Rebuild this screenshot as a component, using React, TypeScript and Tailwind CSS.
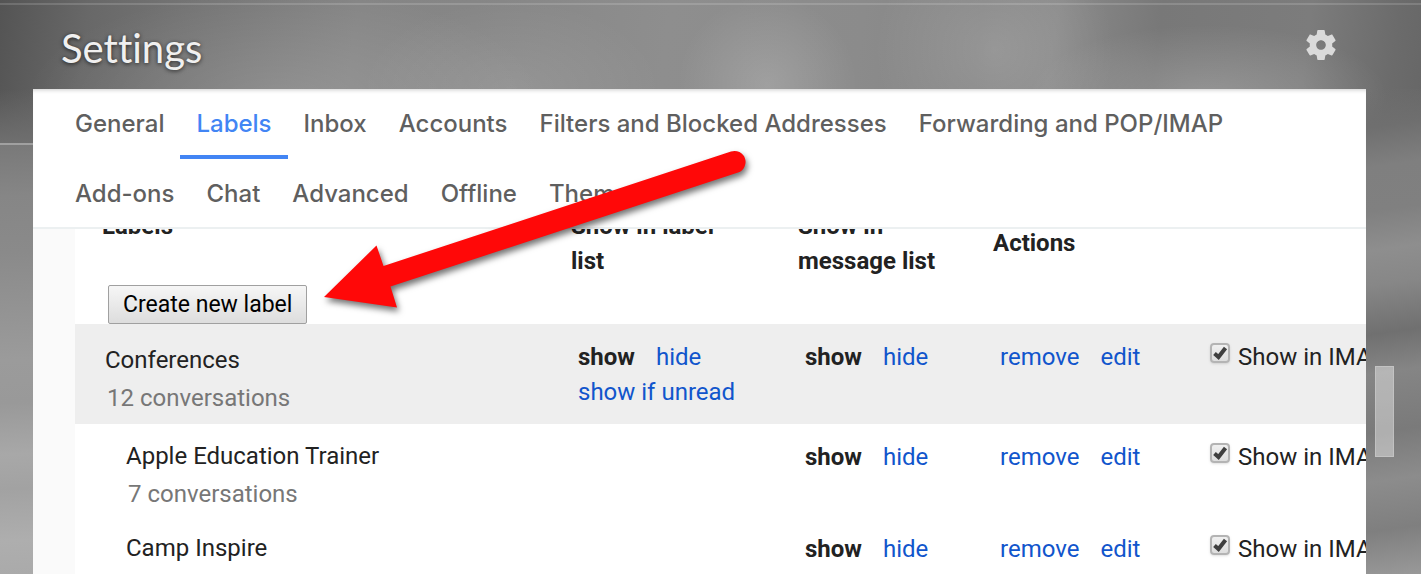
const tabs = [
  "General",
  "Labels",
  "Inbox",
  "Accounts",
  "Filters and Blocked Addresses",
  "Forwarding and POP/IMAP",
  "Add-ons",
  "Chat",
  "Advanced",
  "Offline",
  "Themes",
];

type Label = {
  name: string;
  conversations: string;
  nested: boolean;
  inLabelList: boolean;
};

const labels: Label[] = [
  { name: "Conferences", conversations: "12 conversations", nested: false, inLabelList: true },
  { name: "Apple Education Trainer", conversations: "7 conversations", nested: true, inLabelList: false },
  { name: "Camp Inspire", conversations: "", nested: true, inLabelList: false },
];

function GearIcon() {
  return (
    <svg viewBox="0 0 24 24" className="size-9" fill="#dadada" aria-hidden="true">
      <path d="M19.43 12.98c.04-.32.07-.64.07-.98s-.03-.66-.07-.98l2.11-1.65c.19-.15.24-.42.12-.64l-2-3.46c-.12-.22-.39-.3-.61-.22l-2.49 1c-.52-.4-1.08-.73-1.69-.98l-.38-2.65C14.46 2.18 14.25 2 14 2h-4c-.25 0-.46.18-.49.42l-.38 2.65c-.61.25-1.17.59-1.69.98l-2.49-1c-.23-.09-.49 0-.61.22l-2 3.46c-.13.22-.07.49.12.64l2.11 1.65c-.04.32-.07.65-.07.98s.03.66.07.98l-2.11 1.65c-.19.15-.24.42-.12.64l2 3.46c.12.22.39.3.61.22l2.49-1c.52.4 1.08.73 1.69.98l.38 2.65c.03.24.24.42.49.42h4c.25 0 .46-.18.49-.42l.38-2.65c.61-.25 1.17-.59 1.69-.98l2.49 1c.23.09.49 0 .61-.22l2-3.46c.12-.22.07-.49-.12-.64l-2.11-1.65zM12 15.2c-1.77 0-3.2-1.43-3.2-3.200s1.430-3.200 3.200-3.200 3.200 1.430 3.200 3.200-1.430 3.200-3.200 3.200z" />
    </svg>
  );
}

function Arrow() {
  return (
    <svg
      viewBox="0 0 440 180"
      className="pointer-events-none absolute left-[316px] top-[142px] z-20 h-[180px] w-[440px] drop-shadow-[2px_4px_3px_rgba(0,0,0,0.55)]"
      aria-hidden="true"
    >
      <path
        d="M8 155 L60.500 103.500 L67.500 124 L415 9.500 A11 11 0 0 1 422 30.500 L74.500 144.500 L81 165.500 Z"
        fill="#ff0808"
      />
    </svg>
  );
}

function ImapCheckbox() {
  return (
    <label className="flex items-start gap-2">
      <span className="relative h-9 pt-[3px]">
        <input
          type="checkbox"
          defaultChecked
          className="peer block size-5 appearance-none rounded border-2 border-[#b4b4b4] bg-linear-to-b from-[#f0f0f0] to-[#dedede] shadow-sm"
        />
        <svg
          viewBox="0 0 20 20"
          className="pointer-events-none absolute left-0 top-[3px] hidden size-5 peer-checked:block"
          aria-hidden="true"
        >
          <path d="M4.500 10.500 L8.500 14 L15.500 5" fill="none" stroke="#3f3f3f" strokeWidth="4" />
        </svg>
      </span>
      Show in IMAP
    </label>
  );
}

function ShowHide() {
  return (
    <span className="flex gap-[21px]">
      <b className="font-bold">show</b>
      <a href="#hide" className="text-[#1155cc]">
        hide
      </a>
    </span>
  );
}

// soft light patches over a dark-edged horizontal ramp
const backdrop =
  "bg-[radial-gradient(260px_110px_at_20%_100px,rgba(255,255,255,0.14),transparent),radial-gradient(150px_90px_at_36%_90px,rgba(255,255,255,0.1),transparent),radial-gradient(90px_90px_at_54%_85px,rgba(255,255,255,0.17),transparent),radial-gradient(120px_120px_at_70%_50px,rgba(255,255,255,0.14),transparent),radial-gradient(180px_70px_at_85%_95px,rgba(255,255,255,0.2),transparent),linear-gradient(97deg,#545454_0%,#686868_6%,#737373_12%,#858585_24%,#868686_32%,#8e8e8e_45%,#8b8b8b_58%,#858585_66%,#8a8a8a_71%,#787878_78%,#7c7c7c_88%,#6b6b6b_94%,#606060_100%)]";

export default function App() {
  return (
    <div
      className={`relative flex h-screen flex-col overflow-hidden font-['Roboto',sans-serif] text-2xl leading-[35px] text-[#222] ${backdrop}`}
    >
      <div className="absolute inset-x-0 top-[3px] h-[2px] bg-white/15" />
      <header className="flex h-[89px] shrink-0 items-center justify-between pl-[61px] pr-[82px]">
        <h1 className="pt-[6px] font-['Lato',sans-serif] text-[40px] leading-[48px] text-[#f0f0f0] [font-variant-ligatures:none] text-shadow-[0_1px_4px_rgba(0,0,0,0.7)]">
          Settings
        </h1>
        <button type="button" aria-label="Settings menu">
          <GearIcon />
        </button>
      </header>

      <div className="flex min-h-0 flex-1">
        <div className="flex w-[33px] shrink-0 flex-col">
          <div className="h-14 border-b-2 border-[#a0a0a0] bg-linear-to-b from-transparent to-[#6f6f6f]" />
          <div className="flex-1 bg-linear-[177deg,#797979_0%,#868686_12%,#8a8a8a_25%,#9b9b9b_50%,#999999_60%,#a8a8a8_72%,#a2a2a2_80%,#aeaeae_92%,#aaaaaa_100%]" />
        </div>

        <main className="flex min-w-0 flex-1 flex-col overflow-hidden bg-white">
          <nav className="z-10 flex shrink-0 flex-wrap border-b-2 border-[#ecf0f1] bg-white pl-[26px] pr-16 font-['Inter',sans-serif] font-medium text-[#5f5f5f] shadow-[inset_0_4px_4px_-3px_rgba(0,0,0,0.2)]">
            {tabs.map((tab) => (
              <a
                key={tab}
                href="#tab"
                className={
                  tab === "Labels"
                    ? "h-[70px] border-b-4 border-[#4285f4] px-4 pt-[17px] text-[#4285f4]"
                    : "h-[68px] px-4 pt-[17px]"
                }
              >
                {tab}
              </a>
            ))}
          </nav>

          <div className="min-h-0 flex-1 overflow-hidden bg-[#fafafa] pl-[42px]">
            <table className="-mt-5 w-full table-fixed border-collapse bg-white text-left">
              <colgroup>
                <col className="w-[496px]" />
                <col className="w-[227px]" />
                <col className="w-[195px]" />
                <col className="w-[217px]" />
                <col />
              </colgroup>
              <thead>
                <tr className="h-[115px] align-top">
                  <th className="pl-[27px] font-bold">
                    Labels
                    <button
                      type="button"
                      className="mt-[41px] ml-[6px] block h-[39px] rounded-xs border border-[#a0a0a0] bg-linear-to-b from-[#f6f6f6] to-[#dddddd] px-[14px] text-[23px] font-normal text-black"
                    >
                      Create new label
                    </button>
                  </th>
                  <th className="pr-12 font-bold">Show in label list</th>
                  <th className="pr-12 font-bold">Show in message list</th>
                  <th className="pt-[17px] font-bold">Actions</th>
                  <th />
                </tr>
              </thead>
              <tbody>
                {labels.map((label) => (
                  <tr key={label.name} className={label.nested ? "h-[92px] align-top" : "h-[100px] bg-[#eeeeee] align-top"}>
                    <td className={label.nested ? "pl-[51px] pt-[15px]" : "pl-[30px] pt-[19px]"}>
                      {label.name}
                      <div className="mt-[3px] pl-[2px] text-[#777]">{label.conversations}</div>
                    </td>
                    <td className="pl-[7px] pt-4">
                      {label.inLabelList && (
                        <>
                          <ShowHide />
                          <a href="#unread" className="text-[#1155cc]">
                            show if unread
                          </a>
                        </>
                      )}
                    </td>
                    <td className="pl-[7px] pt-4">
                      <ShowHide />
                    </td>
                    <td className="pl-[7px] pt-4">
                      <span className="flex gap-[21px] text-[#1155cc]">
                        <a href="#remove">remove</a>
                        <a href="#edit">edit</a>
                      </span>
                    </td>
                    <td className="whitespace-nowrap pt-4">
                      <ImapCheckbox />
                    </td>
                  </tr>
                ))}
              </tbody>
            </table>
          </div>
        </main>

        <div className="w-[55px] shrink-0 bg-linear-[172deg,transparent_0%,#6f6f6f_8%,#7f7f7f_16%,#808080_25%,#8e8e8e_33%,#878787_40%,#707070_50%,#858585_58%,#7a7a7a_70%,#8c8c8c_80%,#7f7f7f_90%,#999999_100%]" />
      </div>

      <div className="absolute right-[27px] top-[366px] h-[91px] w-[19px] border border-white/20 bg-white/40" />
      <Arrow />
    </div>
  );
}
